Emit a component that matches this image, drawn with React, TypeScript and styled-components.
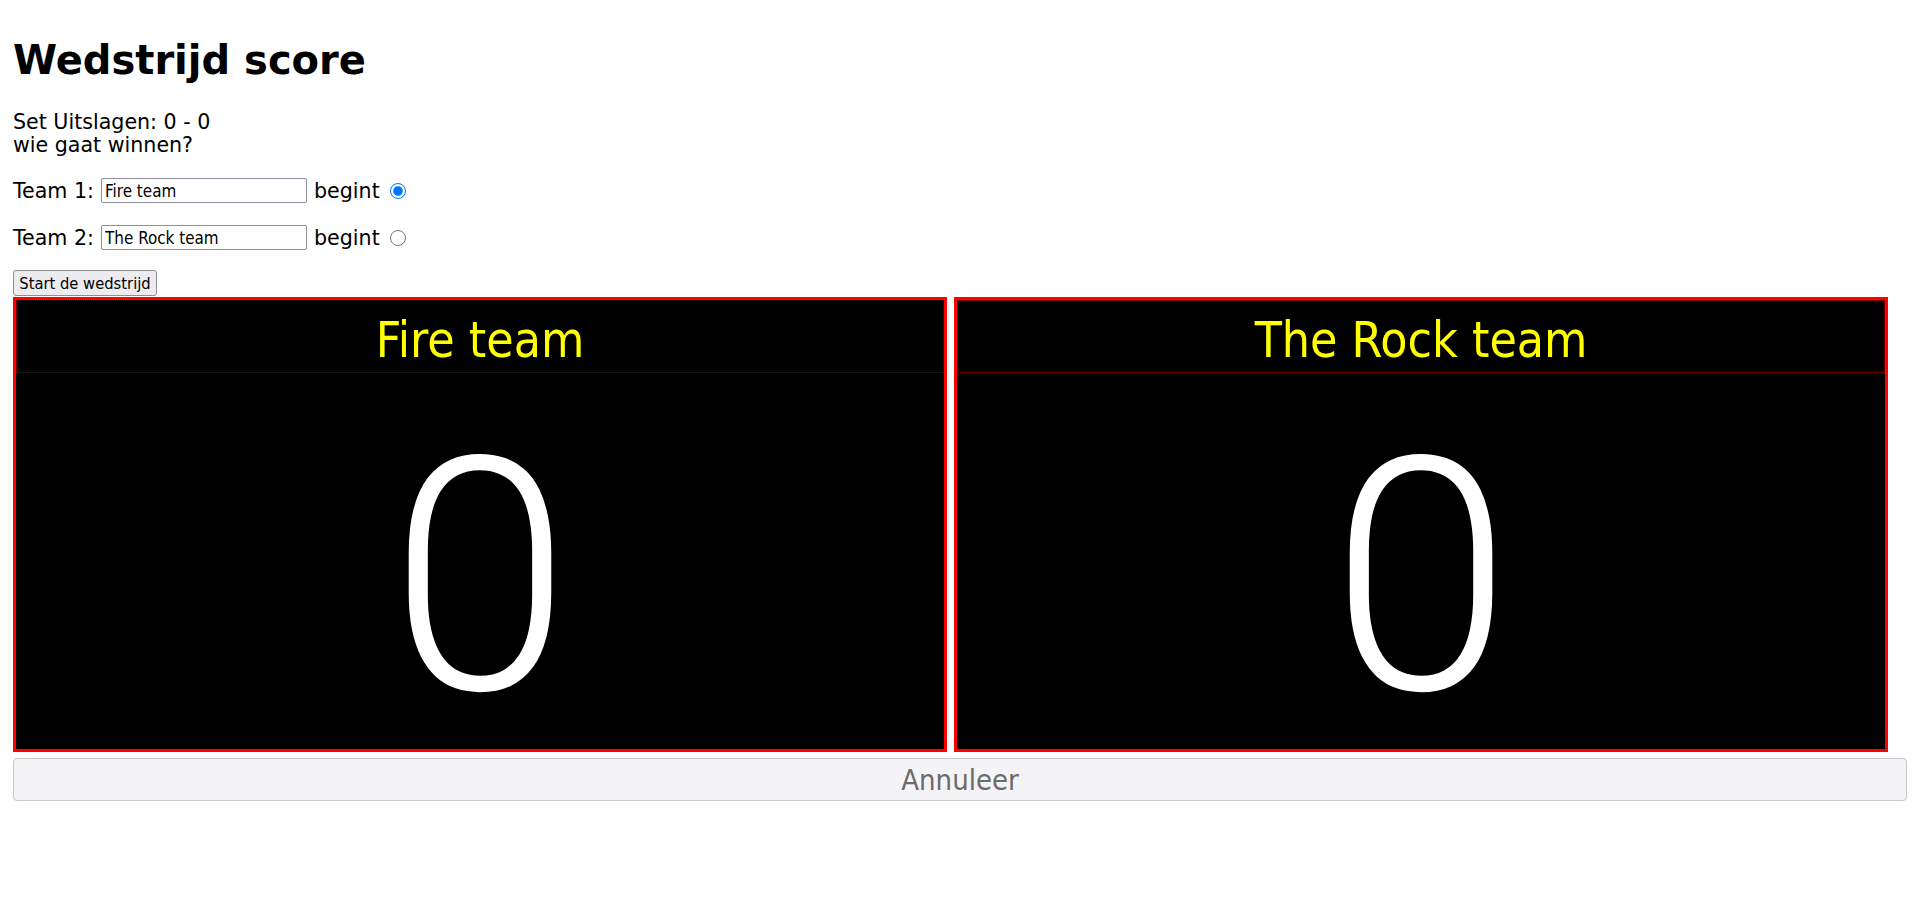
import styled, { createGlobalStyle } from 'styled-components';

const GlobalStyle = createGlobalStyle`
  html, body {
    margin: 0;
    background: #ffffff;
  }

  body {
    padding: 10px 13px;
    font-family: "DejaVu Sans", Verdana, sans-serif;
    font-size: 20.6px;
    color: #000000;
  }
`;

const Page = styled.div`
  display: flex;
  flex-direction: column;
`;

const Title = styled.h1`
  margin: 27px 0;
  font-size: 40px;
  font-weight: bold;
  line-height: 46.6px;
`;

const Info = styled.div`
  line-height: 23.3px;
`;

const TeamRow = styled.div`
  display: flex;
  align-items: center;
  height: 27px;
  margin-top: 20px;
`;

const Label = styled.span`
  margin-right: 7px;
  white-space: pre;
`;

const NameInput = styled.input`
  box-sizing: border-box;
  width: 206px;
  height: 25px;
  margin: 0 7px 0 0;
  padding: 0 3px;
  border: 1px solid #8f8f9d;
  border-radius: 2px;
  font-family: "DejaVu Sans Condensed", Tahoma, sans-serif;
  font-size: 16.9px;
  color: #000000;
  background: #ffffff;
`;

const Radio = styled.input`
  width: 16px;
  height: 16px;
  margin: 0 0 0 10px;
`;

const StartButton = styled.button`
  align-self: flex-start;
  box-sizing: border-box;
  width: 144px;
  height: 26px;
  margin-top: 19px;
  padding: 0;
  border: 1px solid #8d8d96;
  border-radius: 3px;
  background: #ececf0;
  font-family: "DejaVu Sans Condensed", Tahoma, sans-serif;
  font-size: 16.4px;
  color: #000000;
`;

const Board = styled.div`
  display: flex;
  gap: 7px;
  margin-top: 1px;
`;

const Panel = styled.section`
  width: 49%;
  border: 3px solid #ff0000;
  background: #000000;
  display: flex;
  flex-direction: column;
`;

const PanelHeader = styled.div`
  height: 71px;
  border: 1px dotted #800000;
  display: flex;
  justify-content: center;
  align-items: flex-start;
  font-family: "DejaVu Sans Condensed", Tahoma, sans-serif;
  font-size: 49.5px;
  line-height: 56px;
  color: #ffff00;

  span {
    padding-top: 11px;
  }
`;

const ScoreArea = styled.div`
  height: 376px;
  display: flex;
  justify-content: center;
  align-items: flex-start;
  font-family: Roboto, "Noto Sans", sans-serif;
  font-weight: 300;
  font-size: 326px;
  line-height: 1;
  color: #ffffff;

  span {
    padding-top: 42px;
  }
`;

const CancelButton = styled.button`
  box-sizing: border-box;
  width: 100%;
  height: 43px;
  margin-top: 6px;
  padding: 0;
  border: 1px solid #c8c8cc;
  border-radius: 4px;
  background: #f4f4f6;
  font-family: "DejaVu Sans Condensed", Tahoma, sans-serif;
  font-size: 29px;
  color: #6b6b6b;
`;

const teams = [
  { id: 1, name: 'Fire team', starts: true, score: 0 },
  { id: 2, name: 'The Rock team', starts: false, score: 0 },
];

export default function App() {
  return (
    <Page>
      <GlobalStyle />
      <Title>Wedstrijd score</Title>
      <Info>
        <div>Set Uitslagen: 0 - 0</div>
        <div>wie gaat winnen?</div>
      </Info>
      {teams.map(team => (
        <TeamRow key={team.id}>
          <Label>Team {team.id}:</Label>
          <NameInput type="text" defaultValue={team.name} />
          <span>begint</span>
          <Radio type="radio" name="begint" defaultChecked={team.starts} />
        </TeamRow>
      ))}
      <StartButton type="button">Start de wedstrijd</StartButton>
      <Board>
        {teams.map(team => (
          <Panel key={team.id}>
            <PanelHeader>
              <span>{team.name}</span>
            </PanelHeader>
            <ScoreArea>
              <span>{team.score}</span>
            </ScoreArea>
          </Panel>
        ))}
      </Board>
      <CancelButton type="button" disabled>Annuleer</CancelButton>
    </Page>
  );
}
